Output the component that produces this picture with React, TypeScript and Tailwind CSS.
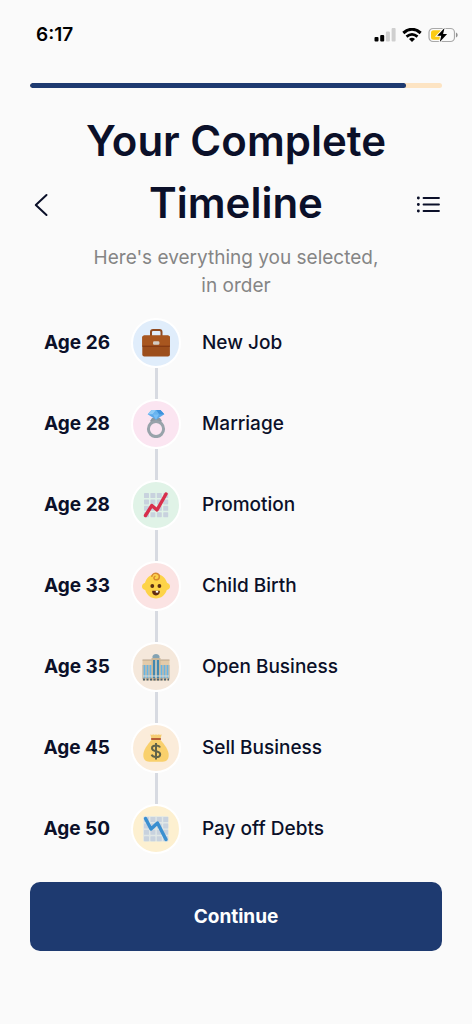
import { ReactNode } from 'react';

interface TimelineEvent {
  age: number;
  label: string;
  circle: string;
  icon: ReactNode;
}

const TILES = [0, 1, 2, 3];

function ChartTiles() {
  return (
    <>
      {TILES.map((row) =>
        TILES.map((col) => (
          <rect
            key={`${row}-${col}`}
            x={2 + col * 6.4}
            y={2 + row * 6.4}
            width="5"
            height="5"
            rx="0.6"
            fill="#c8d2de"
          />
        ))
      )}
    </>
  );
}

function BriefcaseIcon() {
  return (
    <svg viewBox="0 0 28 28" className="size-7" aria-hidden="true">
      <path d="M9 8V3q0-2 2-2h6.500q2 0 2 2V8" fill="none" stroke="#8f4a20" strokeWidth="2" />
      <rect x="0.3" y="6.5" width="27.6" height="21" rx="2" fill="#9c4e1c" />
      <path d="M0.3 8.5q0-2 2-2h23.6q2 0 2 2v8.7H0.3z" fill="#a8561f" />
      <path d="M0.3 17.2h27.6" stroke="#7a3211" strokeWidth="1" />
      <rect x="11" y="12.3" width="6.4" height="3.4" rx="1.2" fill="#d3cbc2" />
    </svg>
  );
}

function RingIcon() {
  return (
    <svg viewBox="0 0 28 28" className="size-7" aria-hidden="true">
      <path d="M10 8h8l2 3-2 2h-8l-2-2z" fill="#8b979f" />
      <circle cx="14" cy="19" r="7.6" fill="none" stroke="#98a3aa" strokeWidth="3" />
      <path d="M9.5 0h9L22.3 4.3 14 9.8 5.7 4.3z" fill="#5aa9ea" />
      <path d="M9.5 0 5.7 4.3h5.2L14 0z" fill="#8ecbf7" />
      <path d="M14 0 17 4.3h5.3L18.5 0z" fill="#3f92dc" />
      <path d="M10.9 4.3H17L14 9.8z" fill="#78bff5" />
      <path d="M14 0l3 4.3h-6.1z" fill="#67b4ef" />
    </svg>
  );
}

function ChartUpIcon() {
  return (
    <svg viewBox="0 0 28 28" className="size-7" aria-hidden="true">
      <ChartTiles />
      <path d="M3.5 24.5 9.800 14.500 15 19 24 3" fill="none" stroke="#d82f4b" strokeWidth="3.4" strokeLinecap="round" strokeLinejoin="round" />
    </svg>
  );
}

function BabyIcon() {
  return (
    <svg viewBox="0 0 28 28" className="size-7" aria-hidden="true">
      <path d="M14 2C19.500 2 23.500 5.500 25 10.800c2 .8 3 2 3 3.700s-1.200 3-3.200 3.600C23 23.500 19 26.500 14 26.500S5 23.500 3.200 18.100C1.200 17.500 0 16.200 0 14.500s1-2.900 3-3.700C4.500 5.500 8.500 2 14 2z" fill="#fdd348" />
      <path d="M9.800 4.200C10.500 1.500 13 .8 15 1.500c3.500 1.200 3 6.300-.8 6.300-2.300 0-3.100-2.600-1.200-3.400" fill="none" stroke="#d98a30" strokeWidth="1.500" strokeLinecap="round" />
      <circle cx="10.3" cy="14" r="1.9" fill="#5a2e13" />
      <circle cx="17.4" cy="14" r="1.9" fill="#5a2e13" />
      <path d="M10.300 18.800h7.400c.5 2.500-1 4.700-3.700 4.700s-4.200-2.200-3.700-4.700z" fill="#612b14" />
      <rect x="13.8" y="18.8" width="2.4" height="1.800" fill="#fff" />
    </svg>
  );
}

function BuildingIcon() {
  return (
    <svg viewBox="0 0 28 28" className="size-7" aria-hidden="true">
      <rect x="0.5" y="7" width="27" height="20.5" fill="#e4cba9" />
      <path d="M0.5 7h27" stroke="#b8a58c" strokeWidth="1" />
      <rect x="9.5" y="5" width="9" height="22.5" fill="#cbb799" />
      <path d="M10.5 5V3q1-2 3.500-2t3.500 2v2z" fill="#83a2b2" />
      <path d="M2.500 12v13M5.500 12v13M8.500 12v13M19.500 12v13M22.500 12v13M25.500 12v13" stroke="#65b5e6" strokeWidth="1.7" />
      <path d="M12 7v18M16 7v18" stroke="#4288b0" strokeWidth="2" />
      <path d="M14 7v18" stroke="#a9cbdc" strokeWidth="1" />
      <path d="M1 12v14M4 12v14M7 12v14M21 12v14M24 12v14M27 12v14" stroke="#9ea9ad" strokeWidth="0.8" />
      <path d="M1 23h26" stroke="#d4dde0" strokeWidth="1" />
      <path d="M1 26.500h26" stroke="#4d6270" strokeWidth="1.8" strokeDasharray="2 1.5" />
    </svg>
  );
}

function MoneyBagIcon() {
  return (
    <svg viewBox="0 0 28 28" className="size-7" aria-hidden="true">
      <path d="M9.500 6h9c4 4.500 8.200 10 8.200 15 0 4.500-2.200 6.700-6 6.700H7.300c-3.800 0-6-2.200-6-6.700 0-5 4.200-10.500 8.200-15z" fill="#f9d06c" />
      <path d="M8.300.2q1.500 1 2.900 0 1.400 1 2.800 0 1.400 1 2.800 0 1.400 1 2.900 0L18.500 5h-9z" fill="#f5cd73" />
      <rect x="9" y="4" width="10" height="2" rx="0.8" fill="#b75c35" />
      <path d="M14 9v16.500M18 13.500c-.6-1.500-2-2-4-2-2.300 0-4 .9-4 2.700 0 4.200 8.200 1.800 8.200 6 0 1.900-1.700 2.900-4.200 2.900-2.200 0-3.800-.7-4.400-2.400" fill="none" stroke="#626449" strokeWidth="2" />
    </svg>
  );
}

function ChartDownIcon() {
  return (
    <svg viewBox="0 0 28 28" className="size-7" aria-hidden="true">
      <rect x="1.2" y="1.2" width="25.2" height="25.2" rx="1" fill="#e0e7e6" />
      <ChartTiles />
      <path d="M3.500 3.500 9 14l6.500-6L24 24.500" fill="none" stroke="#3a8fd0" strokeWidth="3.4" strokeLinecap="round" strokeLinejoin="round" />
    </svg>
  );
}

const events: TimelineEvent[] = [
  { age: 26, label: 'New Job', circle: 'bg-[#e0edfb]', icon: <BriefcaseIcon /> },
  { age: 28, label: 'Marriage', circle: 'bg-[#fbe5f1]', icon: <RingIcon /> },
  { age: 28, label: 'Promotion', circle: 'bg-[#e0f3e7]', icon: <ChartUpIcon /> },
  { age: 33, label: 'Child Birth', circle: 'bg-[#fbe3e3]', icon: <BabyIcon /> },
  { age: 35, label: 'Open Business', circle: 'bg-[#f5e8db]', icon: <BuildingIcon /> },
  { age: 45, label: 'Sell Business', circle: 'bg-[#fbecda]', icon: <MoneyBagIcon /> },
  { age: 50, label: 'Pay off Debts', circle: 'bg-[#fdf0d0]', icon: <ChartDownIcon /> }
];

function StatusBar() {
  return (
    <div className="flex h-[69px] items-center justify-between pl-9 pr-[14px] text-black">
      <span className="text-[19px] font-semibold leading-6">6:17</span>
      <div className="flex items-center gap-[6px]">
        {/* Signal */}
        <svg viewBox="0 0 22 14" className="h-[14px] w-[22px]" aria-hidden="true">
          <rect x="0.5" y="9" width="4" height="4.500" rx="1" />
          <rect x="6.2" y="7" width="4" height="6.500" rx="1" />
          <rect x="11.9" y="3.5" width="4" height="10" rx="1" fill="#cfcfcf" />
          <rect x="17.6" y="0" width="4" height="13.500" rx="1" fill="#cfcfcf" />
        </svg>
        {/* Wifi */}
        <svg viewBox="0 0 20 14" className="h-[14px] w-5" aria-hidden="true">
          <path d="M1.300 5Q10-2.400 18.700 5" fill="none" stroke="#000" strokeWidth="3" />
          <path d="M4.500 8.600q5.500-4.600 11 0" fill="none" stroke="#000" strokeWidth="2.700" />
          <path d="M7 11q3-2.500 6 0l-3 3z" />
        </svg>
        {/* Battery */}
        <svg viewBox="0 0 30 16" className="h-4 w-[30px]" aria-hidden="true">
          <rect x="1" y="1.5" width="25.5" height="13" rx="4" fill="none" stroke="#a9a9a9" strokeWidth="1.2" />
          <path d="M28 5.500q1.700.7 1.700 2.500T28 10.500z" fill="#8f8f8f" />
          <path d="M5.500 3.300h7v9.400h-7q-2.500 0-2.500-2.500V5.800q0-2.500 2.500-2.500z" fill="#fbcb14" />
          <path d="M16.500 1 9.200 8.800h4L11.800 15l7.300-8h-4z" stroke="#fafafa" strokeWidth="2" paintOrder="stroke" />
        </svg>
      </div>
    </div>
  );
}

export default function App() {
  const progress = 91.3;

  return (
    <div className="min-h-screen bg-[#fafafa] font-['Inter',sans-serif] text-[#0b1029]">
      <StatusBar />

      <main className="px-[30px] pb-8 pt-[14px]">
        {/* Progress */}
        <div
          role="progressbar"
          aria-label="Progress"
          aria-valuenow={progress}
          className="h-[5px] overflow-hidden rounded-full bg-[#fde4c3]"
        >
          <div className="h-full rounded-full bg-[#1e3a70]" style={{ width: `${progress}%` }} />
        </div>

        {/* Header */}
        <header className="mt-[22px] flex items-center justify-between">
          <button type="button" aria-label="Back" className="flex w-7 justify-start pl-1">
            <svg viewBox="0 0 14 24" className="h-6 w-[14px]" fill="none" stroke="currentColor" strokeWidth="2" strokeLinecap="round" strokeLinejoin="round">
              <path d="M12.500 2 1.800 12l10.700 10" />
            </svg>
          </button>
          <div className="text-center">
            <h1 className="text-[42px] font-semibold leading-[62px]">
              Your Complete
              <br />
              Timeline
            </h1>
            <p className="mt-[10px] text-[19px] leading-7 text-[#858585]">
              Here's everything you selected,
              <br />
              in order
            </p>
          </div>
          <button type="button" aria-label="List view" className="flex w-7 justify-end">
            <svg viewBox="0 0 26 20" className="h-5 w-[26px]" fill="none" stroke="currentColor" strokeWidth="1.8" strokeLinecap="round">
              <path d="M7.500 3h15.500M7.500 9.500h15.500M7.500 16h15.500" />
              <path d="M2.300 3h.1M2.300 9.500h.1M2.300 16h.1" strokeWidth="2.800" />
            </svg>
          </button>
        </header>

        {/* Timeline */}
        <ol className="mt-[18px] text-[19px] leading-7">
          {events.map((event, index) => (
            <li key={event.label} className="flex">
              <div className="flex h-[50px] w-20 items-center justify-end font-bold">Age {event.age}</div>
              <div className="mx-[21px] flex flex-col items-center">
                <div className={`flex size-[50px] items-center justify-center rounded-full border-2 border-white ${event.circle}`}>
                  {event.icon}
                </div>
                {index < events.length - 1 && <div className="h-[31px] w-[3px] bg-[#d7dae1]" />}
              </div>
              <div className="flex h-[50px] items-center font-medium">{event.label}</div>
            </li>
          ))}
        </ol>

        <button
          type="button"
          className="mt-[28px] h-[69px] w-full rounded-[10px] bg-[#1e3a70] text-[19px] font-bold leading-7 text-white"
        >
          Continue
        </button>
      </main>
    </div>
  );
}
